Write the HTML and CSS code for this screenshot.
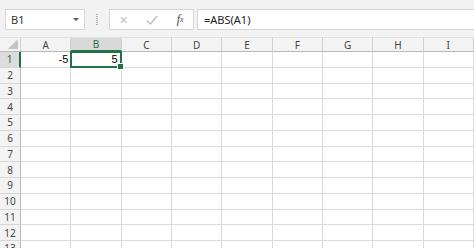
FILE: index.html
```html
<!DOCTYPE html>
<html>
<head>
<meta charset="utf-8">
<link rel="stylesheet" href="styles.css">
</head>
<body>
<div class="app">
  <div class="toolbar">
    <div class="namebox"><span class="nb-text">B1</span><span class="nb-arrow"></span></div>
    <div class="sep"></div>
    <div class="fxbox">
      <span class="btn x">✕</span>
      <span class="btn ok"><svg width="12" height="10" viewBox="0 0 12 10"><path d="M1 5.5 L4.5 9 L11 1" fill="none" stroke="#bdbdbd" stroke-width="1.3"/></svg></span>
      <span class="btn fx"><i>f</i><sub>x</sub></span>
    </div>
    <div class="formula">=ABS(A1)</div>
  </div>
  <div class="grid">
    <div class="hd corner"><span class="tri"></span></div>
    <div class="hd col">A</div>
    <div class="hd col sel">B</div>
    <div class="hd col">C</div>
    <div class="hd col">D</div>
    <div class="hd col">E</div>
    <div class="hd col">F</div>
    <div class="hd col">G</div>
    <div class="hd col">H</div>
    <div class="hd col last">I</div>

    <div class="rh sel">1</div>
    <div class="c num">-5</div>
    <div class="c num active">5</div>
    <div class="c"></div><div class="c"></div><div class="c"></div><div class="c"></div><div class="c"></div><div class="c"></div><div class="c"></div>

    <div class="rh">2</div><div class="c"></div><div class="c"></div><div class="c"></div><div class="c"></div><div class="c"></div><div class="c"></div><div class="c"></div><div class="c"></div><div class="c"></div>
    <div class="rh">3</div><div class="c"></div><div class="c"></div><div class="c"></div><div class="c"></div><div class="c"></div><div class="c"></div><div class="c"></div><div class="c"></div><div class="c"></div>
    <div class="rh">4</div><div class="c"></div><div class="c"></div><div class="c"></div><div class="c"></div><div class="c"></div><div class="c"></div><div class="c"></div><div class="c"></div><div class="c"></div>
    <div class="rh">5</div><div class="c"></div><div class="c"></div><div class="c"></div><div class="c"></div><div class="c"></div><div class="c"></div><div class="c"></div><div class="c"></div><div class="c"></div>
    <div class="rh">6</div><div class="c"></div><div class="c"></div><div class="c"></div><div class="c"></div><div class="c"></div><div class="c"></div><div class="c"></div><div class="c"></div><div class="c"></div>
    <div class="rh">7</div><div class="c"></div><div class="c"></div><div class="c"></div><div class="c"></div><div class="c"></div><div class="c"></div><div class="c"></div><div class="c"></div><div class="c"></div>
    <div class="rh">8</div><div class="c"></div><div class="c"></div><div class="c"></div><div class="c"></div><div class="c"></div><div class="c"></div><div class="c"></div><div class="c"></div><div class="c"></div>
    <div class="rh">9</div><div class="c"></div><div class="c"></div><div class="c"></div><div class="c"></div><div class="c"></div><div class="c"></div><div class="c"></div><div class="c"></div><div class="c"></div>
    <div class="rh">10</div><div class="c"></div><div class="c"></div><div class="c"></div><div class="c"></div><div class="c"></div><div class="c"></div><div class="c"></div><div class="c"></div><div class="c"></div>
    <div class="rh">11</div><div class="c"></div><div class="c"></div><div class="c"></div><div class="c"></div><div class="c"></div><div class="c"></div><div class="c"></div><div class="c"></div><div class="c"></div>
    <div class="rh">12</div><div class="c"></div><div class="c"></div><div class="c"></div><div class="c"></div><div class="c"></div><div class="c"></div><div class="c"></div><div class="c"></div><div class="c"></div>
    <div class="rh">13</div><div class="c"></div><div class="c"></div><div class="c"></div><div class="c"></div><div class="c"></div><div class="c"></div><div class="c"></div><div class="c"></div><div class="c"></div>
  </div>
</div>
</body>
</html>
```

FILE: styles.css
```css
html, body {
  margin: 0;
  padding: 0;
  background: #ffffff;
  overflow: hidden;
}
.app {
  width: 474px;
  height: 248px;
  overflow: hidden;
  font-family: "Noto Sans", "Liberation Sans", sans-serif;
}
.toolbar {
  height: 37px;
  box-sizing: border-box;
  background: #f2f2f2;
  display: flex;
  align-items: flex-start;
  padding: 9px 0 0 5px;
}
.namebox {
  width: 80px;
  height: 21px;
  box-sizing: border-box;
  background: #fff;
  border: 1px solid #d6d6d6;
  display: flex;
  align-items: center;
  justify-content: space-between;
  padding: 0 5px 0 5px;
  font-size: 11px;
  color: #333;
}
.nb-arrow {
  width: 0;
  height: 0;
  border-left: 3px solid transparent;
  border-right: 3px solid transparent;
  border-top: 3px solid #555;
}
.sep {
  width: 2px;
  height: 11px;
  margin: 5px 11px 0 11px;
  background-image: linear-gradient(#b5b5b5 50%, transparent 50%);
  background-size: 2px 2px;
}
.fxbox {
  width: 85px;
  height: 21px;
  box-sizing: border-box;
  background: #fff;
  border: 1px solid #d6d6d6;
  display: flex;
  align-items: center;
  margin-right: 3px;
}
.btn {
  display: flex;
  align-items: center;
  justify-content: center;
}
.btn.x {
  width: 28px;
  margin-left: 0;
  font-size: 11px;
  color: #c2c2c2;
}
.btn.ok {
  width: 30px;
}
.btn.fx {
  width: 26px;
  font-family: "Liberation Serif", serif;
  color: #444;
  font-size: 12px;
}
.btn.fx i {
  font-style: italic;
}
.btn.fx sub {
  font-size: 8px;
  font-style: italic;
  vertical-align: -1px;
}
.formula {
  flex: 1;
  height: 21px;
  box-sizing: border-box;
  background: #fff;
  border: 1px solid #d6d6d6;
  border-right: none;
  font-size: 11px;
  color: #222;
  line-height: 19px;
  padding-left: 6px;
}
.grid {
  display: grid;
  grid-template-columns: 21px repeat(9, 50.33px);
  grid-template-rows: 15px repeat(13, 15.75px);
}
.hd {
  background: #f3f3f3;
  border-right: 1px solid #d0d0d0;
  border-bottom: 1px solid #b9b9b9;
  box-sizing: border-box;
  font-size: 10px;
  color: #444;
  display: flex;
  align-items: center;
  justify-content: center;
  border-top: 1px solid #e2e2e2;
}
.hd.corner {
  position: relative;
  justify-content: flex-end;
  align-items: flex-end;
  padding: 0 2px 2px 0;
}
.tri {
  width: 0;
  height: 0;
  border-left: 10px solid transparent;
  border-bottom: 10px solid #c4c4c4;
}
.hd.col.sel {
  background: #d9d9d9;
  color: #217346;
  border-bottom: 2px solid #217346;
}
.rh {
  background: #f3f3f3;
  border-right: 1px solid #b9b9b9;
  border-bottom: 1px solid #d6d6d6;
  box-sizing: border-box;
  font-size: 10px;
  color: #444;
  display: flex;
  align-items: center;
  justify-content: center;
}
.rh.sel {
  background: #dcdcdc;
  color: #217346;
  border-right: 2px solid #217346;
}
.c {
  border-right: 1px solid #dadada;
  border-bottom: 1px solid #dadada;
  box-sizing: border-box;
  font-family: "Liberation Sans", sans-serif;
  font-size: 11px;
  color: #000;
}
.c.num {
  text-align: right;
  padding-right: 2px;
  line-height: 15px;
}
.c.active {
  position: relative;
  padding-right: 3px;
}
.c.active::before {
  content: "";
  position: absolute;
  left: -1px;
  top: -1px;
  right: -1px;
  bottom: -1px;
  border: 2px solid #217346;
}
.c.active::after {
  content: "";
  position: absolute;
  right: -3px;
  bottom: -3px;
  width: 5px;
  height: 5px;
  background: #217346;
  border: 1px solid #fff;
}
```
